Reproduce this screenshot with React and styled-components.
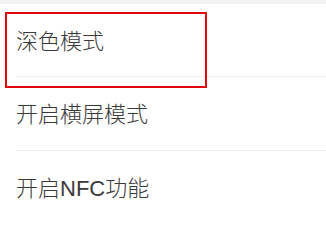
import React from "react";
import styled, { createGlobalStyle } from "styled-components";

const Global = createGlobalStyle`
  html, body { margin: 0; padding: 0; background: #ffffff; }
  body { font-family: "Liberation Sans", "Noto Sans CJK SC", sans-serif; }
`;

const Page = styled.div`
  position: relative;
  width: 326px;
  height: 221px;
  overflow: hidden;
  background: #ffffff;
  border-top: 4px solid #f2f2f2;
  box-sizing: border-box;
`;

const List = styled.div`
  display: flex;
  flex-direction: column;
`;

const Row = styled.div`
  display: flex;
  align-items: center;
  height: ${(p) => p.$h}px;
  padding-left: 16px;
  padding-top: ${(p) => p.$shift || 0}px;
  box-sizing: border-box;
`;

const Label = styled.span`
  font-family: "Liberation Sans", "Noto Sans CJK SC", sans-serif;
  font-size: 22px;
  font-weight: 300;
  line-height: 1;
  color: #3a3a3a;
  white-space: nowrap;
`;

const Divider = styled.div`
  height: 1px;
  margin-left: 16px;
  background: #f0f0f0;
`;

const Highlight = styled.div`
  position: absolute;
  left: 5px;
  top: 8px;
  width: 202px;
  height: 76px;
  border: 2px solid #e3070b;
  box-sizing: border-box;
  pointer-events: none;
`;

const items = ["深色模式", "开启横屏模式", "开启NFC功能"];

export default function App() {
  return (
    <>
      <Global />
      <Page>
        <List>
          <Row $h={72} $shift={4}>
            <Label>{items[0]}</Label>
          </Row>
          <Divider />
          <Row $h={73} $shift={2}>
            <Label>{items[1]}</Label>
          </Row>
          <Divider />
          <Row $h={73} $shift={2}>
            <Label>{items[2]}</Label>
          </Row>
        </List>
        <Highlight />
      </Page>
    </>
  );
}
